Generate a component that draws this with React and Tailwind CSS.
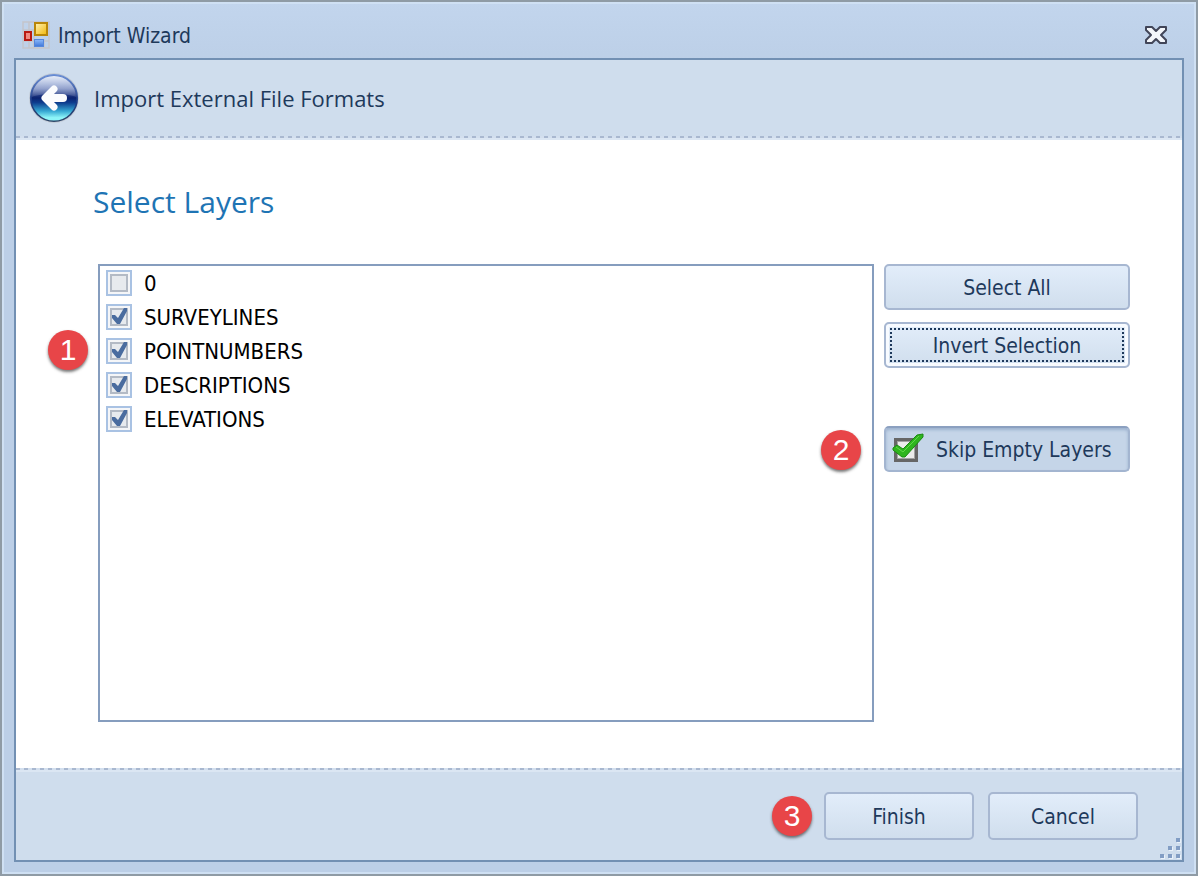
import { useState } from "react";

const LAYERS = ["0", "SURVEYLINES", "POINTNUMBERS", "DESCRIPTIONS", "ELEVATIONS"];

function AppIcon() {
  return (
    <svg width="28" height="28" viewBox="0 0 28 28" aria-hidden="true">
      <defs>
        <linearGradient id="app-gold" x1="0" y1="0" x2="1" y2="1">
          <stop offset="0" stopColor="#fff3b8" />
          <stop offset="1" stopColor="#f2b705" />
        </linearGradient>
        <linearGradient id="app-blue" x1="0" y1="0" x2="0" y2="1">
          <stop offset="0" stopColor="#8db9fa" />
          <stop offset="1" stopColor="#3f76d8" />
        </linearGradient>
      </defs>
      <path d="M1 1H27V27H1ZM7 1V9M1 9H12M7 20V27M12 9V27M1 20H27M22 18V27" fill="none" stroke="#c3c5cb" strokeWidth="1.5" />
      <rect x="13" y="2" width="12" height="12" fill="url(#app-gold)" stroke="#b98608" strokeWidth="2" />
      <rect x="3" y="11" width="6" height="8" fill="#f08a80" stroke="#b81a12" strokeWidth="2" />
      <rect x="12.5" y="18.5" width="9" height="7" fill="url(#app-blue)" stroke="#5587dc" />
    </svg>
  );
}

function BackIcon() {
  return (
    <svg width="52" height="52" viewBox="0 0 52 52" aria-hidden="true">
      <defs>
        <linearGradient id="back-body" x1="0" y1="0" x2="0" y2="1">
          <stop offset="0" stopColor="#5d83cf" />
          <stop offset="0.3" stopColor="#4a63ab" />
          <stop offset="0.5" stopColor="#0b2370" />
          <stop offset="0.6" stopColor="#0d3c8e" />
          <stop offset="0.78" stopColor="#35a7d2" />
          <stop offset="0.92" stopColor="#8df5f8" />
        </linearGradient>
        <linearGradient id="back-gloss" x1="0" y1="0" x2="0" y2="1">
          <stop offset="0" stopColor="#ffffff" stopOpacity="0.85" />
          <stop offset="1" stopColor="#ffffff" stopOpacity="0.1" />
        </linearGradient>
        <linearGradient id="back-rim" x1="0" y1="0" x2="0" y2="1">
          <stop offset="0" stopColor="#6f92d6" />
          <stop offset="0.6" stopColor="#1c3a84" />
          <stop offset="1" stopColor="#2d4668" />
        </linearGradient>
      </defs>
      <circle cx="26" cy="26" r="25" fill="#c3cbd6" />
      <circle cx="26" cy="26" r="23.3" fill="url(#back-body)" stroke="url(#back-rim)" strokeWidth="1.6" />
      <path d="M4 25A22 21 0 0 1 48 25C40 21 12 21 4 25Z" fill="url(#back-gloss)" />
      <g fill="none" stroke="#fbfcfe" strokeLinecap="round" strokeLinejoin="round">
        <path d="M26 17L17 26L26 35" strokeWidth="7" />
        <path d="M21 26H35" strokeWidth="8" />
      </g>
    </svg>
  );
}

function CloseIcon() {
  return (
    <svg width="24" height="20" viewBox="0 0 24 20" aria-hidden="true">
      <path
        d="M2 2H8L12 6L16 2H22V5L17 10L22 15V18H16L12 14L8 18H2V15L7 10L2 5Z"
        fill="#f4f7fb"
        stroke="#414558"
        strokeWidth="2"
        strokeLinejoin="round"
      />
    </svg>
  );
}

function SkipIcon() {
  return (
    <svg width="32" height="32" viewBox="0 0 32 32" aria-hidden="true">
      <rect x="3.5" y="6.5" width="21" height="21" fill="#ececec" stroke="#666666" strokeWidth="3" />
      <rect x="5.5" y="8.5" width="17" height="17" fill="none" stroke="#a3a3a3" />
      <path
        d="M1 15L5 12L11 16L25 2L31 1V4L13 24H10L1 17Z"
        fill="#2fb51e"
        stroke="#1a8a12"
        strokeLinejoin="round"
      />
      <path d="M4 14L11 19L27 3" fill="none" stroke="#62d84a" strokeWidth="1" />
    </svg>
  );
}

function SizeGrip() {
  return (
    <svg width="24" height="24" viewBox="0 0 24 24" aria-hidden="true">
      <path d="M19 3h4v4h-4zM11 11h4v4h-4zM19 11h4v4h-4zM3 19h4v4h-4zM11 19h4v4h-4zM19 19h4v4h-4z" fill="#e9f1fa" />
      <path d="M18 2h4v4h-4zM10 10h4v4h-4zM18 10h4v4h-4zM2 18h4v4h-4zM10 18h4v4h-4zM18 18h4v4h-4z" fill="#829dc4" />
    </svg>
  );
}

function StepBadge({ children }) {
  return (
    <span className="flex size-10 items-center justify-center rounded-full bg-[#e84548] font-['Liberation_Sans',sans-serif] text-[30px] leading-none text-white shadow-[0_2px_3px_rgba(60,60,60,0.7)]">
      {children}
    </span>
  );
}

function Button({ focused, children }) {
  return (
    <button
      type="button"
      className={`h-full w-full rounded-[5px] border-2 border-[#a7b7d1] bg-linear-to-b from-[#e2edfa] to-[#d0deed] ${
        focused ? "p-1 shadow-[inset_0_0_0_3px_#f8fbff]" : ""
      }`}
    >
      <span
        className={`flex h-full items-center justify-center pt-[2px] ${
          focused ? "border-2 border-dotted border-[#1e395b]" : ""
        }`}
      >
        {children}
      </span>
    </button>
  );
}

function LayerRow({ name, checked, onChange }) {
  return (
    <label className="flex h-[34px] items-center gap-3 text-[22px] text-black">
      <span className="grid size-[26px]">
        <input
          type="checkbox"
          checked={checked}
          onChange={onChange}
          className="size-[26px] appearance-none border-2 border-[#a9c2e3] bg-[#f5f6f8] [grid-area:1/1]"
        />
        <svg viewBox="0 0 26 26" className="pointer-events-none size-[26px] [grid-area:1/1]" aria-hidden="true">
          <rect x="5" y="5" width="16" height="16" fill="#e7eaee" stroke="#b3bac5" strokeWidth="2" />
          {checked && <path d="M6 11H9L12 14L18 4H21V7L14 20H11L6 14Z" fill="#4a6c9f" />}
        </svg>
      </span>
      <span className="pt-[2px]">{name}</span>
    </label>
  );
}

function DashedRule() {
  return (
    <div className="shrink-0">
      <div className="h-[2px] bg-[repeating-linear-gradient(90deg,#a9b8d0_0_4px,#d3dfee_4px_8px)]" />
      <div className="h-[2px] bg-[#dbe6f3]" />
    </div>
  );
}

export default function App() {
  const [selected, setSelected] = useState(LAYERS.slice(1));
  const [skipEmpty, setSkipEmpty] = useState(true);

  const toggle = (name) =>
    setSelected((prev) => (prev.includes(name) ? prev.filter((n) => n !== name) : [...prev, name]));

  return (
    <div className="flex min-h-screen flex-col border-2 border-[#8f9ba5] bg-[#bccfe7] font-['DejaVu_Sans_Condensed','Noto_Sans',sans-serif] text-[21px] leading-7 text-[#1e395b]">
      <div className="flex flex-1 flex-col border-2 border-[#cfe0f3] bg-linear-to-b from-[#c2d5ed] to-[#bccfe7] to-[60px] px-[10px] pb-[10px]">
        <header className="flex h-[54px] items-center justify-between pr-4 pl-2 pt-2">
          <div className="flex items-center gap-2">
            <AppIcon />
            <span className="pt-[2px]">Import Wizard</span>
          </div>
          <button type="button" aria-label="Close">
            <CloseIcon />
          </button>
        </header>

        <div className="flex flex-1 flex-col border-2 border-[#7290b3] bg-white">
          <div className="flex h-[76px] items-center gap-[14px] bg-[#cfdded] px-3">
            <button type="button" aria-label="Back">
              <BackIcon />
            </button>
            <span className="font-['Open_Sans',sans-serif] text-[22px]">Import External File Formats</span>
          </div>
          <DashedRule />

          <main className="flex flex-1 flex-col pt-10 pr-[52px] pb-[46px] pl-[82px]">
            <h1 className="-ml-[5px] font-['Open_Sans',sans-serif] text-[30px] leading-11 text-[#1e74b4]">
              Select Layers
            </h1>
            <div className="mt-10 flex flex-1 gap-[10px]">
              <div className="relative flex-1 border-2 border-[#869dbe] bg-white px-[6px]">
                {LAYERS.map((name) => (
                  <LayerRow
                    key={name}
                    name={name}
                    checked={selected.includes(name)}
                    onChange={() => toggle(name)}
                  />
                ))}
                <div className="absolute top-16 -left-[52px]">
                  <StepBadge>1</StepBadge>
                </div>
                <div className="absolute top-[164px] right-[11px]">
                  <StepBadge>2</StepBadge>
                </div>
              </div>

              <div className="flex w-[246px] flex-col">
                <div className="h-[46px]">
                  <Button>Select All</Button>
                </div>
                <div className="mt-3 h-[46px]">
                  <Button focused>Invert Selection</Button>
                </div>
                <button
                  type="button"
                  aria-pressed={skipEmpty}
                  onClick={() => setSkipEmpty(!skipEmpty)}
                  className="mt-[58px] flex h-[46px] items-center gap-3 rounded-[5px] border-2 border-[#a3b5d0] border-t-[#8ba0c0] bg-[#c5d5e8] pl-[6px] shadow-[inset_0_2px_3px_rgba(130,155,190,0.6)]"
                >
                  <SkipIcon />
                  <span className="pt-[2px] whitespace-nowrap">Skip Empty Layers</span>
                </button>
              </div>
            </div>
          </main>

          <DashedRule />
          <footer className="flex h-[88px] justify-end bg-[#cfdded]">
            <div className="flex items-center">
              <StepBadge>3</StepBadge>
              <div className="ml-3 h-12 w-[150px]">
                <Button>Finish</Button>
              </div>
              <div className="ml-[14px] h-12 w-[150px]">
                <Button>Cancel</Button>
              </div>
            </div>
            <div className="flex w-11 items-end justify-end">
              <SizeGrip />
            </div>
          </footer>
        </div>
      </div>
    </div>
  );
}
